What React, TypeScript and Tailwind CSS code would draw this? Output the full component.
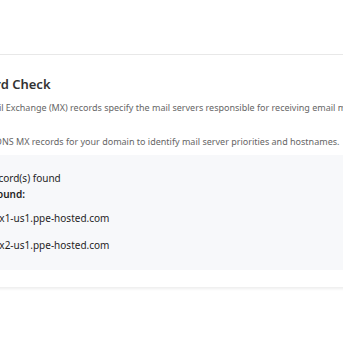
export default function App() {
  return (
    <div
      className="w-[343px] h-[343px] overflow-hidden bg-white"
      style={{ fontFamily: '"Noto Sans", "Open Sans", sans-serif' }}
    >
      <div className="pt-[54px] -ml-[69px] w-[480px]">
        <div className="border-t border-[#e8e8e8] rounded-md bg-white shadow-[0_2px_3px_rgba(0,0,0,0.07)] px-4 pt-5 pb-[17px]">
          <h2 className="-ml-[6px] text-[13px] font-semibold text-[#333] leading-[18px]">MX Record Check</h2>
          <p className="mt-[9px] text-[9px] text-[#666] leading-3">
            The DNS Mail Exchange (MX) records specify the mail servers responsible for receiving email messages for a domain.
          </p>
          <p className="mt-[10px] text-[9px] text-[#666] leading-3">
            Checks the DNS MX records for your domain to identify mail server priorities and hostnames.
          </p>
          <div className="mt-[7px] bg-[#f7f8fa] rounded px-4 pt-[15px] pb-[17px] text-[10px] text-[#1f1f1f]">
            <p className="leading-4">2 MX record(s) found</p>
            <p className="leading-4 font-semibold">Hosts found:</p>
            <ul className="mt-2 pl-[27px] list-disc space-y-[11px]">
              <li className="leading-4">mx1-us1.ppe-hosted.com</li>
              <li className="leading-4">mx2-us1.ppe-hosted.com</li>
            </ul>
          </div>
        </div>
      </div>
    </div>
  );
}
